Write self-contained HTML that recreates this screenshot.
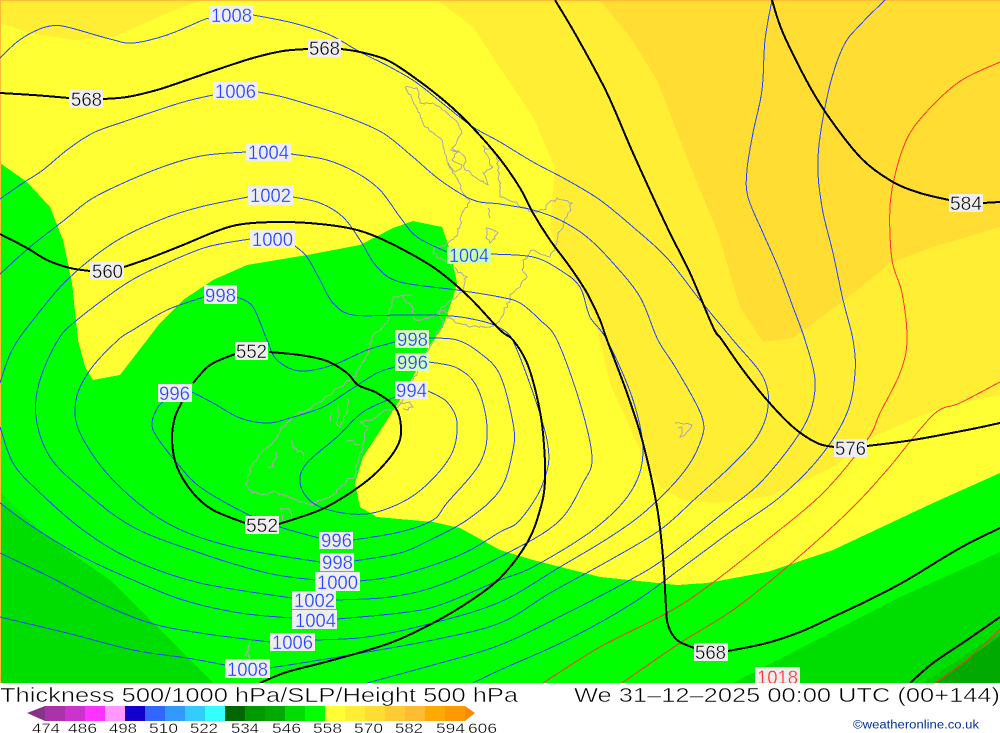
<!DOCTYPE html>
<html><head><meta charset="utf-8"><title>Thickness 500/1000 hPa/SLP/Height 500 hPa</title>
<style>
html,body{margin:0;padding:0;background:#fff;width:1000px;height:733px;overflow:hidden}
svg{display:block}
text{font-family:"Liberation Sans",sans-serif}
.b polyline,.b path{fill:none;stroke:#2244ff;stroke-width:1}
.k polyline,.k path{fill:none;stroke:#000;stroke-width:2;stroke-linejoin:round}
.r polyline,.r path{fill:none;stroke:#ff3333;stroke-width:1}
.g polyline{fill:none;stroke:#aaaaaa;stroke-width:1}
.lb text{font-size:19.5px;fill:#2244ff;stroke:#eee;stroke-width:.3px}
.lk text{font-size:19.5px;fill:#000;stroke:#eee;stroke-width:.45px}
.ti text{font-size:20px;fill:#000;stroke:#fff;stroke-width:.5px}
.lg text{font-size:14px;fill:#000;stroke:#fff;stroke-width:.3px}
</style></head><body>
<svg xmlns="http://www.w3.org/2000/svg" width="1000" height="733" viewBox="0 0 1000 733">
<rect width="1000" height="733" fill="#fff"/>
<g shape-rendering="crispEdges">
<rect width="1000" height="683" fill="#ffee33"/>
<polygon fill="#ffdd33" points="600,0 630,37 657,80 680,140 700,190 717,230 740,307 763,342 793,338 847,298 890,263 933,247 1000,227 1000,0"/>
<polygon fill="#ffff33" points="203,0 437,0 473,27 500,68 533,117 555,167 550,227 560,263 587,300 600,340 610,383 643,457 660,487 683,500 717,503 767,497 800,483 833,467 867,440 917,417 950,405 1000,395 1000,683 0,683 0,23 30,33 75,40 113,37 170,12"/>
<polygon fill="#00ff00" points="0,163 27,182 50,207 63,240 72,283 78,340 85,367 93,380 120,375 147,340 160,323 183,300 213,280 247,265 307,255 360,245 393,228 413,221 442,227 450,250 457,283 453,297 443,327 430,345 403,395 387,420 363,457 355,483 360,507 377,517 433,522 460,528 500,550 533,560 600,577 677,585 707,583 767,572 833,550 933,503 1000,473 1000,683 0,683"/>
<polygon fill="#00ee00" points="0,492 40,530 80,560 213,683 0,683"/>
<polygon fill="#00dd00" points="0,503 33,527 67,550 110,580 213,683 0,683"/>
<polygon fill="#00dd00" points="1000,552 900,597 733,683 1000,683"/>
<polygon fill="#00cc00" points="1000,632 923,683 1000,683"/>
<polygon fill="#00aa00" points="1000,636 934,683 1000,683"/>
<rect width="1000" height="1" fill="#ffbb33"/>
<rect width="1" height="683" fill="#ffbb33"/>
</g>
<g class="g j" shape-rendering="crispEdges">
<polyline points="405,87 417,88 420,103 433,103 447,113 458,123 462,133 452,148 465,157 465,170 475,177 488,185 483,173 493,167 483,145 497,155 500,197 513,202 533,212 543,210 557,198 572,203 567,217 557,240 550,257 533,250 523,260 522,270 527,277 513,293 500,320 490,327 470,327 457,323 447,318 445,309 437,315 450,300 462,292 467,277 457,270 433,253 435,247 448,243 458,233 462,213 470,202 463,193 458,180 447,160 440,138 425,127 418,112 405,87"/>
<polyline points="450,150 458,152 452,160 462,165 455,172 448,162"/>
<polyline points="486,228 498,233 490,243 486,238 486,228"/>
<polyline points="488,208 490,218"/>
<polyline points="358,370 353,377 340,387 320,402 297,415 283,427 275,440 263,450 253,463 247,477 247,485 253,493 267,495 277,492 290,498 312,505 328,498 340,488 347,480 355,477 360,457 363,443 368,427 360,422 372,420 383,412 397,408"/>
<polyline points="412,295 393,297 387,323 372,338 365,360 358,370"/>
<polyline points="397,408 413,380 430,347 443,323 440,312 430,317 415,320 413,308 407,303 402,295"/>
<polyline points="292,440 297,452 302,452 303,460"/>
<polyline points="330,422 332,413"/>
<polyline points="338,405 338,427"/>
<polyline points="347,397 348,410 340,428"/>
<polyline points="347,440 360,445"/>
<polyline points="277,452 273,467 268,468"/>
<polyline points="280,508 288,508 293,518 283,522 280,508"/>
<polyline points="400,403 410,402 413,407 408,410 403,408"/>
<polyline points="675,423 692,425 685,435 680,437 682,427 678,428"/>
<polyline points="250,642 247,652 250,658 245,655 250,645"/>
</g>
<g class="r s" shape-rendering="crispEdges">
<polyline points="1000,62 962,80 933,105 910,133 897,167 890,207 892,260 902,293 907,340 900,373 880,413 867,440 823,493 767,540 707,587 667,613 600,647 543,683"/>
<polyline points="1000,382 960,403 933,415 887,470 847,513 787,567 733,610 680,643 622,683"/>
<polyline points="935,683 967,660 1000,629"/>
</g>
<g class="b s" shape-rendering="crispEdges">
<polyline points="0,58 17,42 33,32 50,26 67,27 110,39 133,43 167,35 203,20 209,19"/>
<polyline points="253,15 293,23 330,35 360,52 390,67 417,83 447,107 473,127 500,142 533,162 567,180 600,200 633,227 667,258 700,300 733,340 763,377 768,407 757,437 730,467 697,497 660,530 610,560 550,593 500,623 433,640 350,655 270,668"/>
<polyline points="225,665 187,658 133,650 67,633 0,617"/>
<polyline points="258,92 283,97 317,107 347,117 383,133 413,157 440,180 473,200 500,204 533,210 560,220 587,237 613,263 640,297 658,340 677,370 702,417 700,443 683,473 647,510 610,537 560,567 500,602 433,623 367,637 315,640"/>
<polyline points="270,642 200,633 150,623 100,603 50,577 0,553"/>
<polyline points="213,95 180,103 123,122 93,133 67,150 43,170 23,183 0,199"/>
<polyline points="291,154 327,160 357,173 380,190 400,217 417,237 447,252"/>
<polyline points="491,254 533,257 560,270 580,287 590,317 607,340 633,400 643,453 630,493 593,530 533,567 500,580 440,605 400,613 337,619"/>
<polyline points="292,618 240,613 183,600 133,580 83,557 33,527 0,503"/>
<polyline points="246,152 207,155 177,162 137,177 93,198 67,218 30,247 0,274"/>
<polyline points="293,197 320,203 343,217 360,240 377,267 400,282 457,290 500,297 520,303 540,320 557,340 580,403 592,457 583,483 557,523 500,557 440,585 390,597 336,600"/>
<polyline points="292,598 200,583 133,560 83,530 37,490 13,463 0,427"/>
<polyline points="248,197 200,207 160,220 113,243 67,280 33,320 12,350 0,383"/>
<polyline points="295,246 307,257 320,280 333,303 353,315 400,315 433,315 467,318 500,328 517,350 547,440 543,483 520,520 500,532 460,555 400,575 360,581"/>
<polyline points="315,580 267,573 200,553 133,527 83,490 50,457 36,417 40,380 58,340 77,320 127,283 167,263 207,247 250,239"/>
<polyline points="429,338 457,340 480,353 500,375 513,423 513,450 500,490 467,520 430,540 400,553 354,561"/>
<polyline points="320,562 233,547 167,523 113,480 80,433 76,400 90,370 118,340 133,330 167,310 204,297"/>
<polyline points="237,297 253,307 267,340 277,360 300,371 333,365 367,350 395,342"/>
<polyline points="429,362 457,368 477,387 487,427 480,463 447,503 433,520 400,532 353,540"/>
<polyline points="319,538 280,527 245,513 200,487 177,463 157,437 152,423 158,407 165,400"/>
<polyline points="192,392 213,403 240,418 267,423 290,418 323,407 350,390 377,373 395,367"/>
<polyline points="428,391 447,402 457,423 450,457 417,493 377,512 343,513 313,503 300,483 307,463 337,437 363,412 395,397"/>
<polyline points="772,0 765,40 762,90 753,133 747,170 748,197 763,233 778,267 793,307 805,340 815,380 810,413 793,443 760,483 727,510 667,557 630,580 567,613 500,645 433,665 367,683"/>
<polyline points="885,0 860,25 843,47 828,93 818,157 822,207 833,253 843,300 853,340 855,373 847,413 820,457 780,497 733,530 683,567 633,603 567,640 500,670 473,683"/>
</g>
<g class="k s" shape-rendering="crispEdges">
<polyline points="0,93 33,95 69,98"/>
<polyline points="103,99 127,97 157,90 187,80 213,71 253,58 283,51 308,49"/>
<polyline points="341,49 360,52 387,60 415,78 447,103 473,128 500,159 520,188 533,213 550,240 570,267 587,293 600,320 607,340 627,393 643,443 657,507 663,557 666,607 668,625 677,640 694,648"/>
<polyline points="728,651 767,643 800,632 833,617 875,597 907,580 960,548 1000,528"/>
<polyline points="0,234 27,248 47,260 70,268 90,271"/>
<polyline points="124,267 150,258 183,245 217,231 243,224 283,222 320,224 353,229 377,237 413,255 440,272 470,298 500,330 513,340 527,363 537,397 543,433 545,480 540,510 527,543 500,578 467,603 433,623 390,643 333,660 287,672 260,683"/>
<polyline points="269,352 300,355 327,361 347,373 358,385 377,393 395,407 401,427 397,447 377,472 350,493 320,510 279,524"/>
<polyline points="245,523 213,510 193,493 177,467 172,440 175,417 182,402"/>
<polyline points="193,383 210,365 235,354"/>
<polyline points="555,0 577,37 607,93 633,153 667,227 690,273 713,327 722,340 743,370 767,400 793,427 817,443 834,447"/>
<polyline points="867,446 913,440 967,430 1000,423"/>
<polyline points="772,0 783,33 810,87 833,123 863,160 893,182 920,193 949,200"/>
<polyline points="983,203 1000,202"/>
<polyline points="910,683 933,663 967,640 1000,617"/>
</g>
<g shape-rendering="crispEdges" fill="#eeeeee">
<rect x="209" y="6" width="44" height="18"/><rect x="308" y="39" width="33" height="18"/><rect x="69" y="90" width="34" height="18"/>
<rect x="213" y="82" width="45" height="18"/><rect x="246" y="143" width="45" height="18"/><rect x="248" y="186" width="45" height="19"/>
<rect x="250" y="230" width="45" height="18"/><rect x="90" y="262" width="34" height="18"/><rect x="204" y="285" width="33" height="19"/>
<rect x="447" y="247" width="44" height="17" fill="#ccffaa"/><rect x="395" y="330" width="34" height="18" fill="#d4ffb8"/><rect x="395" y="353" width="34" height="18" fill="#d4ffb8"/>
<rect x="395" y="381" width="33" height="18"/><rect x="235" y="342" width="33" height="18"/><rect x="158" y="384" width="34" height="18"/>
<rect x="245" y="516" width="34" height="18"/><rect x="319" y="532" width="34" height="17"/><rect x="320" y="553" width="34" height="18"/>
<rect x="315" y="572" width="45" height="19"/><rect x="292" y="591" width="44" height="18"/><rect x="292" y="610" width="45" height="19"/>
<rect x="270" y="633" width="45" height="18"/><rect x="225" y="659" width="45" height="19"/><rect x="834" y="439" width="33" height="18"/>
<rect x="694" y="643" width="34" height="18"/><rect x="755" y="667" width="45" height="16"/><rect x="949" y="194" width="34" height="18"/>
</g>
<g class="lb">
<text x="211" y="22" textLength="41" lengthAdjust="spacingAndGlyphs">1008</text>
<text x="215" y="98" textLength="41" lengthAdjust="spacingAndGlyphs">1006</text>
<text x="248" y="159" textLength="41" lengthAdjust="spacingAndGlyphs">1004</text>
<text x="250" y="202" textLength="41" lengthAdjust="spacingAndGlyphs">1002</text>
<text x="252" y="246" textLength="41" lengthAdjust="spacingAndGlyphs">1000</text>
<text x="205" y="302" textLength="31" lengthAdjust="spacingAndGlyphs">998</text>
<text x="449" y="262" textLength="40" lengthAdjust="spacingAndGlyphs" style="stroke:#ccffaa">1004</text>
<text x="397" y="346" textLength="31" lengthAdjust="spacingAndGlyphs" style="stroke:#d4ffb8">998</text>
<text x="397" y="369" textLength="31" lengthAdjust="spacingAndGlyphs" style="stroke:#d4ffb8">996</text>
<text x="396" y="397" textLength="31" lengthAdjust="spacingAndGlyphs">994</text>
<text x="159" y="400" textLength="31" lengthAdjust="spacingAndGlyphs">996</text>
<text x="321" y="547" textLength="31" lengthAdjust="spacingAndGlyphs">996</text>
<text x="322" y="569" textLength="31" lengthAdjust="spacingAndGlyphs">998</text>
<text x="317" y="589" textLength="41" lengthAdjust="spacingAndGlyphs">1000</text>
<text x="294" y="607" textLength="41" lengthAdjust="spacingAndGlyphs">1002</text>
<text x="295" y="627" textLength="41" lengthAdjust="spacingAndGlyphs">1004</text>
<text x="272" y="649" textLength="41" lengthAdjust="spacingAndGlyphs">1006</text>
<text x="227" y="676" textLength="41" lengthAdjust="spacingAndGlyphs">1008</text>
<text x="757" y="684" textLength="41" lengthAdjust="spacingAndGlyphs" style="fill:#ff3333">1018</text>
</g>
<g class="lk">
<text x="309" y="55" textLength="31" lengthAdjust="spacingAndGlyphs">568</text>
<text x="71" y="106" textLength="31" lengthAdjust="spacingAndGlyphs">568</text>
<text x="92" y="278" textLength="31" lengthAdjust="spacingAndGlyphs">560</text>
<text x="236" y="358" textLength="31" lengthAdjust="spacingAndGlyphs">552</text>
<text x="246" y="532" textLength="32" lengthAdjust="spacingAndGlyphs">552</text>
<text x="835" y="455" textLength="31" lengthAdjust="spacingAndGlyphs">576</text>
<text x="695" y="659" textLength="31" lengthAdjust="spacingAndGlyphs">568</text>
<text x="950" y="210" textLength="32" lengthAdjust="spacingAndGlyphs">584</text>
</g>
<rect y="683" width="1000" height="50" fill="#fff"/>
<g class="ti">
<text x="0" y="702" textLength="518" lengthAdjust="spacingAndGlyphs">Thickness 500/1000 hPa/SLP/Height 500 hPa</text>
<text x="574" y="702" textLength="426" lengthAdjust="spacingAndGlyphs">We 31–12–2025 00:00 UTC (00+144)</text>
</g>
<g shape-rendering="crispEdges">
<polygon points="27,713 45,706 45,721" fill="#883388" shape-rendering="auto"/>
<rect x="45" y="706" width="20" height="15" fill="#aa33aa"/><rect x="65" y="706" width="20" height="15" fill="#cc33cc"/><rect x="85" y="706" width="20" height="15" fill="#ff33ff"/><rect x="105" y="706" width="20" height="15" fill="#ff99ff"/>
<rect x="125" y="706" width="20" height="15" fill="#1100cc"/><rect x="145" y="706" width="20" height="15" fill="#3366ff"/><rect x="165" y="706" width="20" height="15" fill="#3399ff"/><rect x="185" y="706" width="20" height="15" fill="#33ccff"/><rect x="205" y="706" width="20" height="15" fill="#33ffff"/>
<rect x="225" y="706" width="20" height="15" fill="#006600"/><rect x="245" y="706" width="20" height="15" fill="#009900"/><rect x="265" y="706" width="20" height="15" fill="#00aa00"/><rect x="285" y="706" width="20" height="15" fill="#00dd00"/><rect x="305" y="706" width="20" height="15" fill="#00ff00"/>
<rect x="325" y="706" width="20" height="15" fill="#ffff33"/><rect x="345" y="706" width="20" height="15" fill="#ffee33"/><rect x="365" y="706" width="20" height="15" fill="#ffdd33"/><rect x="385" y="706" width="20" height="15" fill="#ffcc33"/><rect x="405" y="706" width="20" height="15" fill="#ffbb33"/><rect x="425" y="706" width="20" height="15" fill="#ffaa00"/><rect x="445" y="706" width="20" height="15" fill="#ff9900"/>
<polygon points="465,706 475,713 465,721" fill="#ff8800" shape-rendering="auto"/>
</g>
<g class="lg">
<text x="32" y="733" textLength="28" lengthAdjust="spacingAndGlyphs">474</text>
<text x="68" y="733" textLength="29" lengthAdjust="spacingAndGlyphs">486</text>
<text x="109" y="733" textLength="28" lengthAdjust="spacingAndGlyphs">498</text>
<text x="149" y="733" textLength="29" lengthAdjust="spacingAndGlyphs">510</text>
<text x="190" y="733" textLength="28" lengthAdjust="spacingAndGlyphs">522</text>
<text x="231" y="733" textLength="28" lengthAdjust="spacingAndGlyphs">534</text>
<text x="272" y="733" textLength="29" lengthAdjust="spacingAndGlyphs">546</text>
<text x="313" y="733" textLength="29" lengthAdjust="spacingAndGlyphs">558</text>
<text x="354" y="733" textLength="29" lengthAdjust="spacingAndGlyphs">570</text>
<text x="395" y="733" textLength="28" lengthAdjust="spacingAndGlyphs">582</text>
<text x="436" y="733" textLength="29" lengthAdjust="spacingAndGlyphs">594</text>
<text x="468" y="733" textLength="29" lengthAdjust="spacingAndGlyphs">606</text>
</g>
<text x="853" y="728.5" textLength="126" lengthAdjust="spacingAndGlyphs" style="font-size:11.5px;fill:#003399">©weatheronline.co.uk</text>
</svg>
<script>
(function(){
var NS="http://www.w3.org/2000/svg";
function P(e){return e.getAttribute("points").trim().split(/\s+/).map(function(s){var a=s.split(",");return[+a[0],+a[1]]});}
/* smooth contour lines (Catmull-Rom) */
document.querySelectorAll(".s polyline").forEach(function(e){
  var p=P(e),d="M"+p[0][0]+" "+p[0][1],n=p.length;
  for(var i=0;i<n-1;i++){
    var a=p[Math.max(i-1,0)],b=p[i],c=p[i+1],f=p[Math.min(i+2,n-1)];
    d+="C"+(b[0]+(c[0]-a[0])/6).toFixed(1)+" "+(b[1]+(c[1]-a[1])/6).toFixed(1)+" "+(c[0]-(f[0]-b[0])/6).toFixed(1)+" "+(c[1]-(f[1]-b[1])/6).toFixed(1)+" "+c[0]+" "+c[1];
  }
  var q=document.createElementNS(NS,"path");q.setAttribute("d",d);e.parentNode.replaceChild(q,e);
});
/* roughen coastline */
var seed=7;function R(){seed=(seed*16807)%2147483647;return seed/2147483647-.5;}
document.querySelectorAll(".j polyline").forEach(function(e){
  var p=P(e),o=[];
  for(var i=0;i<p.length-1;i++){
    var a=p[i],b=p[i+1],L=Math.hypot(b[0]-a[0],b[1]-a[1]),m=Math.max(1,Math.round(L/3));
    for(var k=0;k<m;k++){var t=k/m,J=k?3:0;o.push((a[0]+(b[0]-a[0])*t+R()*J).toFixed(1)+","+(a[1]+(b[1]-a[1])*t+R()*J).toFixed(1));}
  }
  var z=p[p.length-1];o.push(z[0]+","+z[1]);
  e.setAttribute("points",o.join(" "));
});
})();
</script>
</body></html>
